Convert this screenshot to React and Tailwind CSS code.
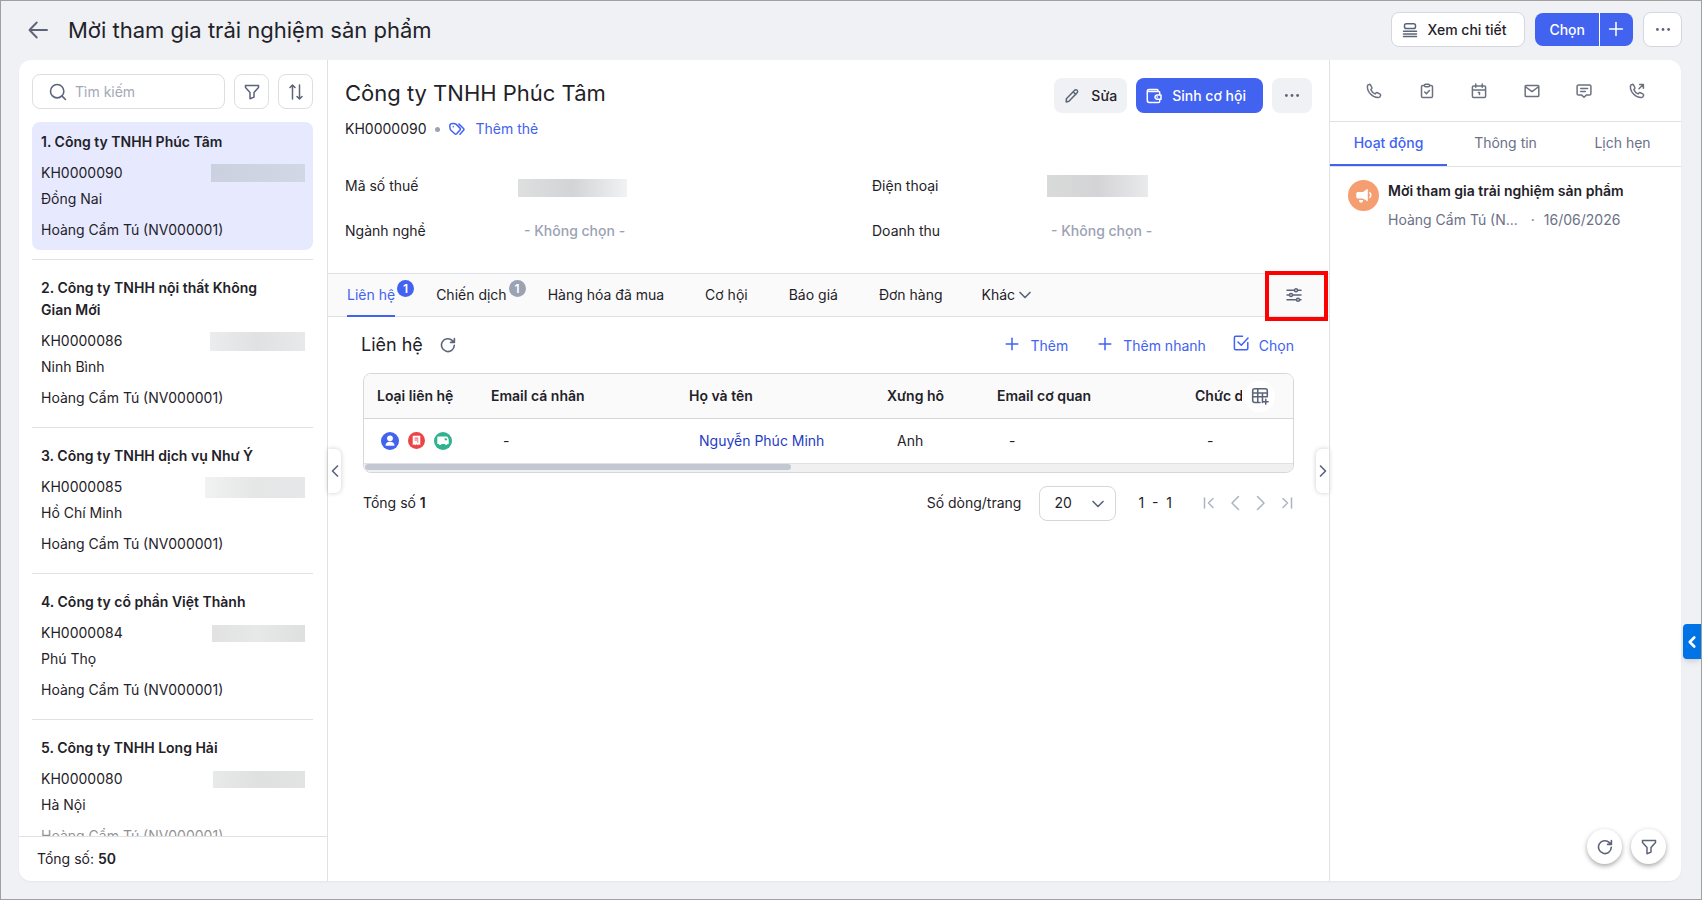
import { useState } from 'react';
import { ChevronDown, ChevronLeft, ChevronRight, Plus, Search } from 'lucide-react';

const customers = [
  { id: 1, name: 'Công ty TNHH Phúc Tâm', code: 'KH0000090', city: 'Đồng Nai', owner: 'Hoàng Cẩm Tú (NV000001)', mask: 'w-[94px] h-[18px] from-[#ccd1df] to-[#d2d7e5]' },
  { id: 2, name: 'Công ty TNHH nội thất Không Gian Mới', code: 'KH0000086', city: 'Ninh Bình', owner: 'Hoàng Cẩm Tú (NV000001)', mask: 'w-[95px] h-[19px] from-[#ebeced] via-[#e0e1e2] to-[#e8e9ea]' },
  { id: 3, name: 'Công ty TNHH dịch vụ Như Ý', code: 'KH0000085', city: 'Hồ Chí Minh', owner: 'Hoàng Cẩm Tú (NV000001)', mask: 'w-[100px] h-[21px] from-[#f1f2f2] via-[#e5e6e6] to-[#e6e7e9]' },
  { id: 4, name: 'Công ty cổ phần Việt Thành', code: 'KH0000084', city: 'Phú Thọ', owner: 'Hoàng Cẩm Tú (NV000001)', mask: 'w-[93px] h-[17px] from-[#e2e2e2] via-[#e7e8e8] to-[#dee0e0]' },
  { id: 5, name: 'Công ty TNHH Long Hải', code: 'KH0000080', city: 'Hà Nội', owner: 'Hoàng Cẩm Tú (NV000001)', mask: 'w-[92px] h-[17px] from-[#e8eae9] via-[#dfe0e0] to-[#e2e3e3]' },
];

const tabs = [
  { label: 'Liên hệ', count: 1 },
  { label: 'Chiến dịch', count: 1 },
  { label: 'Hàng hóa đã mua' },
  { label: 'Cơ hội' },
  { label: 'Báo giá' },
  { label: 'Đơn hàng' },
];

function Icon({ children, className = 'size-4', stroke = '1.5' }) {
  return (
    <svg viewBox="0 0 16 16" fill="none" stroke="currentColor" strokeWidth={stroke} strokeLinecap="round" strokeLinejoin="round" className={`${className} shrink-0`} aria-hidden="true">
      {children}
    </svg>
  );
}

const FilterIcon = () => (
  <Icon>
    <path d="M1.5 1.6h13v1.9L10 8.4v4.7l-4 1.6V8.4L1.5 3.5z" />
  </Icon>
);

const SortIcon = () => (
  <Icon>
    <path d="M4.5 15V1M2 3.5 4.5 1 7 3.500M11.500 1v14M9 12.500l2.500 2.500 2.500-2.500" />
  </Icon>
);

const RefreshIcon = () => (
  <Icon stroke="1.6">
    <path d="M14.300 8.300a6.400 6.400 0 1 1-1.900-4.700l1.600 1.500M14.400 1.600v3.800h-3.800" />
  </Icon>
);

const DotsIcon = () => (
  <svg viewBox="0 0 16 16" fill="currentColor" className="size-4" aria-hidden="true">
    <circle cx="2.400" cy="7.500" r="1.400" />
    <circle cx="8" cy="7.500" r="1.400" />
    <circle cx="13.600" cy="7.500" r="1.400" />
  </svg>
);

const PhonePath = () => (
  <path d="M1.400 3.400c0-.8.800-1.900 1.700-2 .6-.1 1.100.1 1.400.6l1.300 2.300c.4.600.2 1.100-.2 1.500l-.8.7c.7 1.900 2.300 3.600 4.300 4.400l.8-.9c.4-.4.900-.5 1.400-.3l2.500 1.200c.600.300.9.800.8 1.400-.2 1-1.300 2.100-2.200 2.200C6.800 14.900 1.200 9.200 1.400 3.400z" />
);

const activityActions = [
  { label: 'Gọi điện', icon: <PhonePath /> },
  { label: 'Nhiệm vụ', icon: <path d="M5.500 2.500H3.800c-.8 0-1.300.5-1.300 1.300v9.400c0 .8.5 1.300 1.300 1.300h8.400c.8 0 1.300-.5 1.300-1.300V3.800c0-.8-.5-1.300-1.300-1.300h-1.700M6.500 1.200h3c.7 0 1 .5 1 1.200s-.3 1.300-1 1.300h-3c-.7 0-1-.6-1-1.300s.3-1.200 1-1.200zM5.700 9l1.700 1.700 3-3.200" /> },
  { label: 'Lịch hẹn', icon: <path d="M2.600 2.900h10.800c.7 0 1.200.5 1.200 1.200v9.200c0 .7-.5 1.200-1.200 1.200H2.600c-.7 0-1.200-.5-1.200-1.200V4.100c0-.7.5-1.200 1.200-1.200zM1.400 7h13.200M4.800 1v3.300M11.200 1v3.300M7.300 9.600h1.200v2" /> },
  { label: 'Email', icon: <path d="M2.100 2.400h11.800c.5 0 .9.400.9.900v9.400c0 .5-.4.900-.9.900H2.100c-.5 0-.9-.4-.9-.9V3.300c0-.5.4-.9.9-.9zM1.800 4 8 8.600 14.200 4" /> },
  { label: 'Tin nhắn', icon: <path d="M2.500 1.900h11c.8 0 1.400.6 1.400 1.400v7.400c0 .8-.6 1.400-1.400 1.400h-3.200L8 14.200l-2.300-2.100H2.500c-.8 0-1.400-.6-1.400-1.400V3.300c0-.8.6-1.400 1.400-1.400zM4.700 5.600h6.900M4.700 8.600h4.600" /> },
  { label: 'Cuộc gọi ra', icon: <><PhonePath /><path d="m10 5.800 4-4M10.600 1.500h3.800v3.800" /></> },
];

function CustomerCard({ item, active, onSelect }) {
  return (
    <li className="pb-[9px] border-b border-[#dfe1e4] mb-2">
      <button type="button" onClick={onSelect} className={`block w-full rounded-lg px-[9px] py-[9px] text-left ${active ? 'bg-[#e7eaff]' : 'bg-white'}`}>
        <span className="block pr-7 font-semibold">{`${item.id}. ${item.name}`}</span>
        <span className="mt-[9px] flex items-center justify-between">
          <span>{item.code}</span>
          <span className={`-mr-px bg-linear-to-r ${item.mask}`} />
        </span>
        <span className="mt-1 block">{item.city}</span>
        <span className="mt-[9px] block">{item.owner}</span>
      </button>
    </li>
  );
}

function Sidebar() {
  const [selected, setSelected] = useState(1);

  return (
    <aside className="flex w-[309px] shrink-0 flex-col border-r border-[#dfe1e4]">
      <div className="flex gap-[9px] pt-[14px] pr-[14px] pb-[13px] pl-[13px]">
        <label className="flex h-[35px] min-w-0 flex-1 items-center gap-[7px] rounded-lg border border-[#dcdee2] pl-[15px] text-[#5c6479]">
          <Search className="size-5 shrink-0" strokeWidth={1.9} />
          <input type="text" aria-label="Tìm kiếm" placeholder="Tìm kiếm" className="w-full min-w-0 outline-none placeholder:text-[#a3a8b6]" />
        </label>
        <button type="button" aria-label="Lọc" className="flex size-[35px] items-center justify-center rounded-lg border border-[#dcdee2] text-[#5c6479]">
          <FilterIcon />
        </button>
        <button type="button" aria-label="Sắp xếp" className="flex size-[35px] items-center justify-center rounded-lg border border-[#dcdee2] text-[#5c6479]">
          <SortIcon />
        </button>
      </div>

      <div className="relative min-h-0 flex-1 overflow-hidden pr-[14px] pl-[13px]">
        <ul>
          {customers.map((item) => (
            <CustomerCard key={item.id} item={item} active={item.id === selected} onSelect={() => setSelected(item.id)} />
          ))}
        </ul>
        <div className="pointer-events-none absolute inset-x-0 bottom-0 h-3 bg-white/50" />
      </div>

      <div className="flex h-[45px] shrink-0 items-center border-t border-[#dfe1e4] px-[18px]">
        <p>Tổng số: <b className="font-semibold">50</b></p>
      </div>
    </aside>
  );
}

function CustomerHeader() {
  return (
    <div className="px-[17px] pt-[17px]">
      <div className="flex items-start justify-between">
        <h2 className="text-[22px] leading-8">Công ty TNHH Phúc Tâm</h2>
        <div className="mt-px flex gap-[9px]">
          <button type="button" className="flex h-[35px] items-center gap-[11px] rounded-lg bg-[#f0f1f4] px-[10px] font-medium">
            <span className="text-[#5c6479]">
              <Icon>
                <path d="m2.200 13.900.2-3.200 8-8.300c.9-.9 2-.9 2.700-.2.8.8.7 1.900-.2 2.800l-8 8.200zM9.300 4l2.500 2.400" />
              </Icon>
            </span>
            Sửa
          </button>
          <button type="button" className="flex h-[35px] items-center gap-[10px] rounded-lg bg-[#4262f0] pr-[17px] pl-[10px] font-medium text-white">
            <Icon>
              <path d="M13.700 6V4.400c0-.6-.4-1-1-1H2.700M12 3.300V2.600c0-.6-.4-1-1-1H3.200c-1.100 0-1.900.7-1.900 1.700v9.300c0 1.100.8 1.900 1.900 1.900h9.200c.8 0 1.300-.5 1.300-1.300v-1.500M15 6.900h-4.300a2.200 2.200 0 0 0 0 4.300H15zM11 9.050h.4" />
            </Icon>
            Sinh cơ hội
          </button>
          <button type="button" aria-label="Thao tác khác" className="flex h-[35px] w-10 items-center justify-center rounded-lg bg-[#f0f1f4] text-[#5c6479]">
            <DotsIcon />
          </button>
        </div>
      </div>

      <div className="mt-[5px] flex items-center">
        <span>KH0000090</span>
        <span className="mx-[9px] size-[5px] rounded-full bg-[#9ba2b4]" />
        <a href="#tags" className="flex items-center gap-[10px] text-[#4262f0]">
          <Icon>
            <path d="M.900 4.200c.1-.8.500-1.200 1.300-1.400 2-.5 3.300-.5 4.800.3l4 4c.6.600.6 1.200 0 1.800l-3.300 3.900c-.6.600-1.300.6-1.900 0L1.900 9.200C.8 8 .7 6 .900 4.200zM10 3.100l4.500 4.400c.6.600.6 1.200 0 1.800l-3.500 4M4.200 5.800h.1" />
          </Icon>
          Thêm thẻ
        </a>
      </div>

      <dl className="mt-[35px] grid grid-cols-[179px_4fr_179px_3fr] gap-y-[23px]">
        <dt>Mã số thuế</dt>
        <dd className="flex items-center">
          <span className="mt-1 -ml-[6px] h-[18px] w-[109px] bg-linear-to-r from-[#dedfdf] via-[#d3d4d6] to-[#f1f2f4]" />
        </dd>
        <dt>Điện thoại</dt>
        <dd className="flex items-center">
          <span className="-ml-1 h-[22px] w-[101px] bg-linear-to-r from-[#d9dada] via-[#d4d4d6] to-[#e9eaec]" />
        </dd>
        <dt>Ngành nghề</dt>
        <dd className="font-medium text-[#9ba2b4]">- Không chọn -</dd>
        <dt>Doanh thu</dt>
        <dd className="font-medium text-[#9ba2b4]">- Không chọn -</dd>
      </dl>
    </div>
  );
}

function RecordTabs() {
  const [active, setActive] = useState('Liên hệ');

  return (
    <div className="mt-[31px] flex h-11 shrink-0 items-stretch border-y border-[#dfe1e4] bg-[#fafafa] pl-[19px]">
      <div role="tablist" className="flex gap-[41px]">
        {tabs.map((tab) => (
          <button
            key={tab.label}
            type="button"
            role="tab"
            aria-selected={active === tab.label}
            onClick={() => setActive(tab.label)}
            className={`relative -mb-px border-b-2 ${active === tab.label ? 'border-[#4262f0] text-[#4262f0]' : 'border-transparent'}`}
          >
            {tab.label}
            {tab.count && (
              <span className={`absolute top-[6px] left-full ml-[2px] flex size-[17px] items-center justify-center rounded-full text-xs font-semibold text-white ${active === tab.label ? 'bg-[#4262f0]' : 'bg-[#9ba2b4]'}`}>
                {tab.count}
              </span>
            )}
          </button>
        ))}
        <button type="button" className="-ml-[2px] flex items-center">
          Khác
          <ChevronDown className="size-5 text-[#5c6479]" />
        </button>
      </div>
      <div className="relative ml-auto flex w-[68px] items-center">
        <button type="button" aria-label="Thiết lập hiển thị" className="ml-[25px] text-[#5c6479]">
          <Icon>
            <path d="M1 3.300h7.200M11.800 3.300H15M1 8h2.200M6.800 8H15M1 12.700h9.200M13.800 12.700H15" />
            <circle cx="10" cy="3.300" r="1.500" />
            <circle cx="5" cy="8" r="1.500" />
            <circle cx="12" cy="12.700" r="1.500" />
          </Icon>
        </button>
        <div className="pointer-events-none absolute -top-[3px] right-px -bottom-[5px] left-1 border-4 border-[#ff0000]" />
      </div>
    </div>
  );
}

function ContactTypeIcons() {
  return (
    <div className="flex gap-[9px]">
      <svg viewBox="0 0 18 18" className="size-[18px]" role="img" aria-label="Cá nhân">
        <circle cx="9" cy="9" r="9" fill="#4262f0" />
        <circle cx="9" cy="6.300" r="2.900" fill="#fff" />
        <path d="M4.500 13.800c0-2.800 1.700-4 4.500-4s4.500 1.200 4.500 4z" fill="#fff" />
      </svg>
      <svg viewBox="0 0 18 18" className="size-[17px]" role="img" aria-label="Hóa đơn">
        <circle cx="9" cy="9" r="9" fill="#ec4347" />
        <path d="M5 4h8v10l-1.300-1-1.300 1L9 13l-1.400 1-1.300-1L5 14z" fill="#fff" />
        <path d="M7 6.500h4M7 8.500h4M9.500 10.500H11" stroke="#ec4347" />
      </svg>
      <svg viewBox="0 0 18 18" className="size-[18px]" role="img" aria-label="Giao hàng">
        <circle cx="9" cy="9" r="9" fill="#2fb38e" />
        <path d="M4.500 4.500h8c1.200 0 2.200 1.900 2.200 3.400v4h-1.200a1.400 1.400 0 0 1-2.700 0H7.500a1.400 1.400 0 0 1-2.700 0H3.300V5.700c0-.7.500-1.200 1.200-1.200z" fill="#fff" />
        <path d="M10.700 6.300h1.700l1 2h-2.700z" fill="#2fb38e" />
      </svg>
    </div>
  );
}

function ContactTable() {
  return (
    <div className="relative overflow-hidden rounded-lg border border-[#d5d7dc]">
      <table className="w-full table-fixed border-collapse text-left">
        <colgroup>
          <col className="w-[114px]" />
          <col className="w-[198px]" />
          <col className="w-[198px]" />
          <col className="w-[110px]" />
          <col className="w-[198px]" />
          <col />
        </colgroup>
        <thead>
          <tr className="h-11 border-b border-[#d5d7dc] bg-[#fafafa]">
            {['Loại liên hệ', 'Email cá nhân', 'Họ và tên', 'Xưng hô', 'Email cơ quan', 'Chức danh'].map((label) => (
              <th key={label} scope="col" className="overflow-hidden pl-[13px] font-semibold whitespace-nowrap">{label}</th>
            ))}
          </tr>
        </thead>
        <tbody>
          <tr className="h-[45px] border-b border-[#dfe1e4]">
            <td className="pl-[17px]"><ContactTypeIcons /></td>
            <td className="pl-[25px]">-</td>
            <td className="pl-[23px]"><a href="#contact" className="text-[#1f3cc4]">Nguyễn Phúc Minh</a></td>
            <td className="pl-[23px]">Anh</td>
            <td className="pl-[25px]">-</td>
            <td className="pl-[25px]">-</td>
          </tr>
        </tbody>
      </table>
      <div className="h-2 bg-[#f0f0f0] px-px">
        <div className="h-[6px] w-[46%] rounded-full bg-[#c3c7d2]" />
      </div>
      {/* pinned column picker */}
      <div className="absolute top-px right-0 flex h-[42px] w-[51px] items-center bg-[#fafafa]">
        <button type="button" aria-label="Thêm cột" className="ml-[2px] flex size-[31px] items-center justify-center rounded-full bg-white text-[#5c6479]">
          <Icon className="size-[18px]" stroke="1.4">
            <path d="M8 13.700H3.200c-1 0-1.700-.7-1.700-1.700V3.300c0-1 .7-1.700 1.700-1.700h9.600c1 0 1.700.7 1.700 1.700v5.300H1.500M1.500 5.300h13M6 1.600v12M10.200 5.300v8.400M11 13.100h4.200M13.100 11v4.200" />
          </Icon>
        </button>
      </div>
    </div>
  );
}

function ContactSection() {
  return (
    <section className="px-[35px]">
      <div className="flex h-14 items-center justify-between">
        <div className="flex items-center gap-[17px]">
          <h3 className="-ml-[2px] text-lg">Liên hệ</h3>
          <button type="button" aria-label="Tải lại" className="text-[#5c6479]"><RefreshIcon /></button>
        </div>
        <div className="flex gap-[27px] text-[#4262f0]">
          <button type="button" className="flex items-start gap-2">
            <Plus className="size-5" strokeWidth={1.8} />
            <span className="pt-px">Thêm</span>
          </button>
          <button type="button" className="flex items-start gap-2">
            <Plus className="size-5" strokeWidth={1.8} />
            <span className="pt-px">Thêm nhanh</span>
          </button>
          <button type="button" className="flex items-start gap-[10px]">
            <Icon className="mt-px size-4">
              <path d="M9.500 1.300H2.600c-.7 0-1.200.5-1.200 1.200v11c0 .7.5 1.200 1.200 1.200h11c.7 0 1.200-.5 1.200-1.200V7.500M5 7l3.300 3.200L15 3" />
            </Icon>
            <span className="pt-px">Chọn</span>
          </button>
        </div>
      </div>

      <ContactTable />

      <div className="mt-[13px] flex h-[35px] items-center">
        <p>Tổng số <b className="font-semibold">1</b></p>
        <label htmlFor="page-size" className="mr-[18px] ml-auto">Số dòng/trang</label>
        <div className="relative">
          <select id="page-size" defaultValue="20" className="h-[35px] w-[77px] appearance-none rounded-lg border border-[#d5d7dc] bg-white pl-[14px]">
            <option>20</option>
            <option>50</option>
            <option>100</option>
          </select>
          <ChevronDown className="pointer-events-none absolute top-2 right-2 size-5 text-[#5c6479]" />
        </div>
        <span className="mx-[22px]">1&nbsp; -&nbsp; 1</span>
        <nav aria-label="Phân trang" className="-mr-px ml-[7px] flex gap-[10px] text-[#aeb3c1]">
          <button type="button" aria-label="Trang đầu"><Icon><path d="M3.500 3v10M12 3.500 7.500 8l4.500 4.500" /></Icon></button>
          <button type="button" aria-label="Trang trước"><Icon><path d="M11.500 1.500 5 8l6.500 6.500" /></Icon></button>
          <button type="button" aria-label="Trang sau"><Icon><path d="M4.500 1.500 11 8l-6.500 6.500" /></Icon></button>
          <button type="button" aria-label="Trang cuối"><Icon><path d="M12.500 3v10M4 3.500 8.500 8 4 12.500" /></Icon></button>
        </nav>
      </div>
    </section>
  );
}

function ActivityPanel() {
  const [active, setActive] = useState('Hoạt động');

  return (
    <aside className="relative w-[352px] shrink-0 border-l border-[#dfe1e4]">
      <div className="flex h-[62px] items-center justify-around border-b border-[#dfe1e4] px-[18px] text-[#6b7180]">
        {activityActions.map((action) => (
          <button key={action.label} type="button" aria-label={action.label}>
            <Icon>{action.icon}</Icon>
          </button>
        ))}
      </div>

      <div role="tablist" className="grid h-[45px] grid-cols-3 border-b border-[#dfe1e4]">
        {['Hoạt động', 'Thông tin', 'Lịch hẹn'].map((label) => (
          <button
            key={label}
            type="button"
            role="tab"
            aria-selected={active === label}
            onClick={() => setActive(label)}
            className={`border-b-2 ${active === label ? 'border-[#4262f0] font-medium text-[#4262f0]' : 'border-transparent text-[#6b7186]'}`}
          >
            {label}
          </button>
        ))}
      </div>

      <article className="flex gap-[9px] px-[18px] pt-[13px]">
        <svg viewBox="0 0 31 31" className="size-[31px] shrink-0" aria-hidden="true">
          <circle cx="15.500" cy="15.500" r="15.500" fill="#f59e72" />
          <path d="M10 12h5l4-3c.4-.2.8 0 .8.500v11.200c0 .5-.4.700-.8.400l-4-2.600h-5c-1 0-1.700-.6-1.700-1.500v-3.500c0-.9.7-1.500 1.700-1.500z" fill="#fff" />
          <path d="M11 20h4v.7a2 2 0 0 1-4 0z" fill="#fff" />
          <path d="M21.800 12.800c1.300 1.400 1.300 3.300 0 4.700" stroke="#fff" strokeWidth="1.400" fill="none" strokeLinecap="round" />
        </svg>
        <div>
          <h4 className="font-semibold">Mời tham gia trải nghiệm sản phẩm</h4>
          <p className="mt-[7px] text-[#6b7186]">Hoàng Cẩm Tú (N... <span className="mx-[9px]">·</span>16/06/2026</p>
        </div>
      </article>

      <div className="absolute right-[15px] bottom-[17px] flex gap-[9px] text-[#5c6479]">
        <button type="button" aria-label="Tải lại hoạt động" className="flex size-[35px] items-center justify-center rounded-full bg-white shadow-[0_2px_5px_rgba(0,0,0,0.35)]">
          <RefreshIcon />
        </button>
        <button type="button" aria-label="Lọc hoạt động" className="flex size-[35px] items-center justify-center rounded-full bg-white shadow-[0_2px_5px_rgba(0,0,0,0.35)]">
          <FilterIcon />
        </button>
      </div>
    </aside>
  );
}

export default function App() {
  return (
    <div className="relative flex h-screen flex-col overflow-hidden border border-[#a0a0a0] bg-[#f0f1f4] font-['Inter',sans-serif] text-sm leading-[22px] text-[#1f2229]">
      <header className="flex h-[59px] shrink-0 items-center pr-[19px] pb-[2px] pl-[27px]">
        <button type="button" aria-label="Quay lại" className="text-[#5c6479]">
          <Icon className="size-5">
            <path d="M15.200 8H1.200M7 2 1.200 8 7 14" />
          </Icon>
        </button>
        <h1 className="ml-5 text-[22px]">Mời tham gia trải nghiệm sản phẩm</h1>
        <div className="ml-auto flex items-center gap-[10px]">
          <button type="button" className="flex h-[35px] items-center gap-[10px] rounded-lg border border-[#d5d7dc] bg-white pr-[18px] pl-[10px] font-medium">
            <span className="text-[#5c6479]">
              <Icon>
                <rect x="2.500" y="1.800" width="11" height="4.700" rx="1.800" />
                <path d="M1.500 9.300h13M1.500 11.900h13M1.500 14.500h13" />
              </Icon>
            </span>
            Xem chi tiết
          </button>
          <div className="flex h-[33px] overflow-hidden rounded-lg bg-[#4262f0] text-white">
            <button type="button" className="px-[14px] font-medium">Chọn</button>
            <button type="button" aria-label="Thêm mới" className="flex w-[34px] items-center justify-center border-l border-white pr-[2px] pb-[2px]">
              <Plus className="size-[22px]" strokeWidth={1.7} />
            </button>
          </div>
          <button type="button" aria-label="Tùy chọn khác" className="flex h-[35px] w-[39px] items-center justify-center rounded-lg border border-[#d5d7dc] bg-white text-[#5c6479]">
            <DotsIcon />
          </button>
        </div>
      </header>

      <div className="mr-5 mb-[18px] ml-[18px] flex min-h-0 flex-1 overflow-hidden rounded-xl bg-white shadow-xs">
        <Sidebar />
        <main className="relative flex min-w-0 flex-1 flex-col">
          <CustomerHeader />
          <RecordTabs />
          <ContactSection />
          <button type="button" aria-label="Thu gọn danh sách" className="absolute top-[389px] left-0 flex h-11 w-[13px] items-center justify-center rounded-r-md bg-white text-[#5c6479] shadow-[0_0_5px_rgba(0,0,0,0.2)]">
            <ChevronLeft className="size-5 shrink-0" />
          </button>
          <button type="button" aria-label="Thu gọn hoạt động" className="absolute top-[389px] right-0 flex h-11 w-[13px] items-center justify-center rounded-l-md bg-white text-[#5c6479] shadow-[0_0_5px_rgba(0,0,0,0.2)]">
            <ChevronRight className="size-5 shrink-0" />
          </button>
        </main>
        <ActivityPanel />
      </div>

      <button type="button" aria-label="Mở trợ giúp" className="absolute right-0 bottom-[240px] flex h-[35px] w-[18px] items-center justify-center rounded-l bg-[#0073e6] text-white shadow-md">
        <ChevronLeft className="size-[18px] shrink-0" strokeWidth={3.5} />
      </button>
    </div>
  );
}
